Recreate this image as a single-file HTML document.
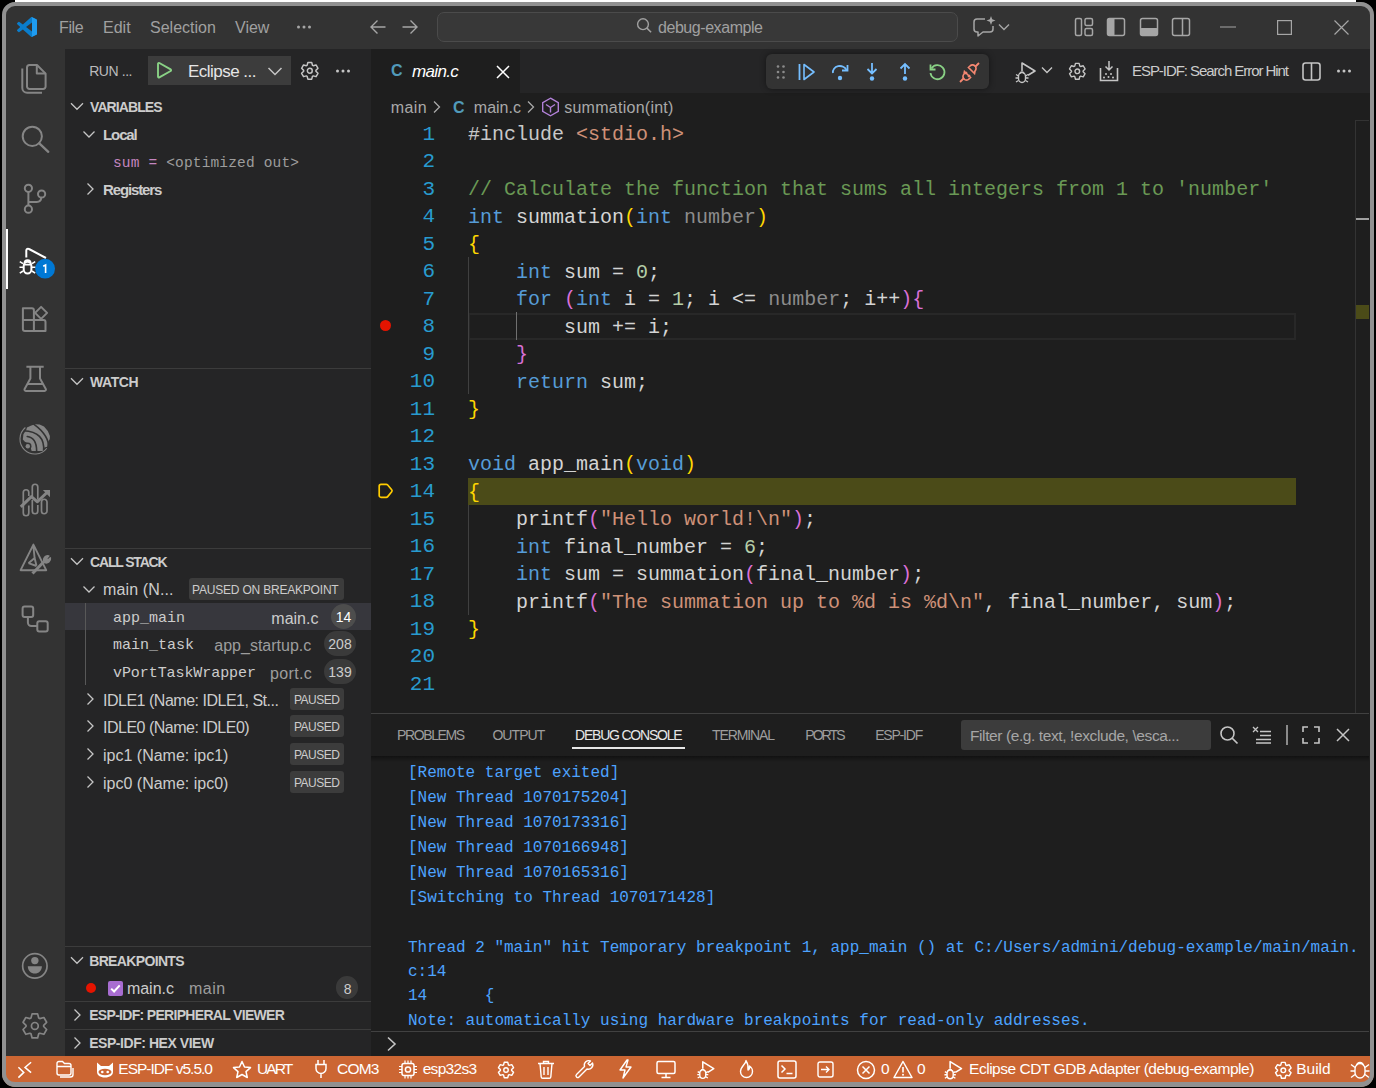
<!DOCTYPE html>
<html><head><meta charset="utf-8">
<style>
*{box-sizing:border-box}
html,body{margin:0;padding:0}
body{width:1376px;height:1088px;background:#000;position:relative;overflow:hidden;font-family:"Liberation Sans",sans-serif;}
.a{position:absolute}
.t{position:absolute;white-space:pre;line-height:1}
.mono{font-family:"Liberation Mono",monospace}
svg{position:absolute;overflow:visible}
#win{position:absolute;left:2px;top:2px;width:1372px;height:1085px;border-radius:13px;overflow:hidden;background:#1e1e1e}
#frame{position:absolute;left:2px;top:2px;width:1372px;height:1085px;border:4px solid #919191;border-bottom-width:5px;border-radius:13px;box-shadow:0 0 0 30px #000;pointer-events:none}
</style></head><body>
<div id="win">
<div style="position:absolute;left:-2px;top:-2px;width:1376px;height:1088px">
<!-- TITLE BAR -->
<div class="a" style="left:0;top:0;width:1376px;height:49px;background:#333333"></div>

<!-- title content -->
<svg style="left:17px;top:17px" width="20" height="20" viewBox="0 0 100 100"><path fill="#0a7dcc" d="M96.46 10.8L75.86.87a6.27 6.27 0 0 0-7.1 1.2L29.35 38.04 12.19 25.01a4.17 4.17 0 0 0-5.32.24L1.36 30.26a4.17 4.17 0 0 0 0 6.16L16.25 50 1.36 63.58a4.17 4.17 0 0 0 0 6.16l5.51 5.01a4.17 4.17 0 0 0 5.32.24l17.16-13.03L68.77 97.93a6.27 6.27 0 0 0 7.1 1.2l20.6-9.91A6.25 6.25 0 0 0 100 83.59V16.41a6.25 6.25 0 0 0-3.54-5.61zM75.02 72.7L45.11 50l29.91-22.7z"></path><path fill="#007acc" d="M96.46 10.8L75.86.87a6.27 6.27 0 0 0-7.1 1.2L1.36 63.58a4.17 4.17 0 0 0 0 6.16l5.51 5.01a4.17 4.17 0 0 0 5.32.24L93.46 10.05z" opacity="0"></path><path fill="#1f9cf0" d="M75.86.87a6.27 6.27 0 0 0-7.1 1.2 4 4 0 0 1 6.26 2.9V95a4 4 0 0 1-6.25 2.93 6.27 6.27 0 0 0 7.1 1.2l20.6-9.91A6.25 6.25 0 0 0 100 83.59V16.41a6.25 6.25 0 0 0-3.54-5.61z"></path></svg>
<div class="t" style="left: 59px; top: 20px; font-size: 16px; color: rgb(160, 160, 160); letter-spacing: -0.367px;">File</div>
<div class="t" style="left: 103px; top: 20px; font-size: 16px; color: rgb(160, 160, 160); letter-spacing: 0px;">Edit</div>
<div class="t" style="left: 150px; top: 20px; font-size: 16px; color: rgb(160, 160, 160); letter-spacing: 0px;">Selection</div>
<div class="t" style="left: 235px; top: 20px; font-size: 16px; color: rgb(160, 160, 160); letter-spacing: 0px;">View</div>
<svg style="left:296px;top:25px" width="16" height="4" viewBox="0 0 16 4"><circle cx="2.5" cy="2" r="1.5" fill="#a6a6a6"></circle><circle cx="8" cy="2" r="1.5" fill="#a6a6a6"></circle><circle cx="13.5" cy="2" r="1.5" fill="#a6a6a6"></circle></svg>
<svg style="left:369px;top:19px" width="18" height="16" viewBox="0 0 18 16"><path d="M16.5 8H2M8.5 1.5L2 8l6.5 6.5" stroke="#a6a6a6" stroke-width="1.4" fill="none"></path></svg>
<svg style="left:401px;top:19px" width="18" height="16" viewBox="0 0 18 16"><path d="M1.5 8H16M9.5 1.5L16 8l-6.5 6.5" stroke="#a6a6a6" stroke-width="1.4" fill="none"></path></svg>
<div class="a" style="left:437px;top:12px;width:521px;height:30px;border:1px solid #4b4b4b;background:#383838;border-radius:7px"></div>
<svg style="left:630px;top:12px" width="26" height="26" viewBox="630 12 26 26"><circle cx="643" cy="24.2" r="5.4" stroke="#a0a0a0" stroke-width="1.4" fill="none"></circle><path d="M646.9 28.1l4.2 4.2" stroke="#a0a0a0" stroke-width="1.5"></path></svg>
<div class="t" style="left: 658px; top: 20px; font-size: 16px; color: rgb(160, 160, 160); letter-spacing: -0.442px;">debug-example</div>
<svg style="left:972px;top:15px" width="26" height="24" viewBox="0 0 26 24"><path d="M13 4H5a3 3 0 0 0-3 3v7a3 3 0 0 0 3 3h1v4l5-4h7a3 3 0 0 0 3-3v-3" stroke="#a6a6a6" stroke-width="1.5" fill="none" stroke-linejoin="round"></path><path d="M19 1l1.2 3.3L23.5 5.5l-3.3 1.2L19 10l-1.2-3.3L14.5 5.5l3.3-1.2z" fill="#a6a6a6"></path></svg>
<svg style="left:998px;top:23px" width="12" height="8" viewBox="0 0 12 8"><path d="M1 1.5l5 5 5-5" stroke="#a6a6a6" stroke-width="1.4" fill="none"></path></svg>
<svg style="left:1074px;top:17px" width="20" height="20" viewBox="0 0 20 20"><rect x="1.5" y="1.5" width="6" height="17" rx="1.5" stroke="#a6a6a6" stroke-width="1.5" fill="none"></rect><rect x="11" y="1.5" width="7.5" height="7" rx="1.5" stroke="#a6a6a6" stroke-width="1.5" fill="none"></rect><rect x="11" y="11.5" width="7.5" height="7" rx="1.5" stroke="#a6a6a6" stroke-width="1.5" fill="none"></rect></svg>
<svg style="left:1106px;top:17px" width="20" height="20" viewBox="0 0 20 20"><rect x="1.5" y="1.5" width="17" height="17" rx="2" stroke="#a6a6a6" stroke-width="1.5" fill="none"></rect><rect x="1.5" y="1.5" width="7" height="17" rx="1" fill="#a6a6a6"></rect></svg>
<svg style="left:1139px;top:17px" width="20" height="20" viewBox="0 0 20 20"><rect x="1.5" y="1.5" width="17" height="17" rx="2" stroke="#a6a6a6" stroke-width="1.5" fill="none"></rect><rect x="1.5" y="11" width="17" height="7.5" rx="1" fill="#a6a6a6"></rect></svg>
<svg style="left:1171px;top:17px" width="20" height="20" viewBox="0 0 20 20"><rect x="1.5" y="1.5" width="17" height="17" rx="2" stroke="#a6a6a6" stroke-width="1.5" fill="none"></rect><path d="M11.5 1.5v17" stroke="#a6a6a6" stroke-width="1.5"></path></svg>
<svg style="left:1220px;top:26px" width="16" height="2" viewBox="0 0 16 2"><path d="M0 1h16" stroke="#a6a6a6" stroke-width="1.2"></path></svg>
<svg style="left:1277px;top:20px" width="15" height="15" viewBox="0 0 15 15"><rect x="0.6" y="0.6" width="13.8" height="13.8" stroke="#a6a6a6" stroke-width="1.2" fill="none"></rect></svg>
<svg style="left:1334px;top:20px" width="15" height="15" viewBox="0 0 15 15"><path d="M0.5 0.5l14 14M14.5 0.5l-14 14" stroke="#a6a6a6" stroke-width="1.2"></path></svg>
<!-- ACTIVITY BAR -->
<div class="a" style="left:0;top:49px;width:65px;height:1007px;background:#333333"></div>
<!-- SIDEBAR -->
<div class="a" style="left:65px;top:49px;width:306px;height:1007px;background:#252526"></div>

<!-- activity icons -->
<div class="a" style="left:6px;top:229px;width:2px;height:60px;background:#fff"></div>
<svg style="left:0;top:0" width="65" height="1088" viewBox="0 0 65 1088">
<g fill="none" stroke="#858585" stroke-width="2" stroke-linejoin="round">
<path d="M29.5 65H37l8.6 8.6V86.5a2.5 2.5 0 0 1-2.5 2.5H29.5A2.5 2.5 0 0 1 27 86.5V67.5A2.5 2.5 0 0 1 29.5 65z"></path>
<path d="M36.8 65v8.5h8.8"></path>
<path d="M22.3 68.5V88a4.8 4.8 0 0 0 4.8 4.8H42"></path>
<circle cx="32.3" cy="136.3" r="9.6"></circle>
<path d="M39.3 143.3L48.3 151.8" stroke-width="2.3" stroke-linecap="round"></path>
<circle cx="28.4" cy="188.3" r="3.6"></circle>
<circle cx="28.4" cy="209.2" r="3.6"></circle>
<circle cx="41.6" cy="194" r="3.6"></circle>
<path d="M28.4 191.9v13.7M41.2 197.6c0 2.6-1.8 4.4-4.4 4.4H28.6"></path>
<path d="M22.9 308.3h9a2 2 0 0 1 2 2V320H22.9z M22.9 320h11v11h-9a2 2 0 0 1-2-2z M33.9 320h9.6a2 2 0 0 1 2 2v9H33.9z"></path>
<path d="M41.1 306.9l6 6-6 6-6-6z"></path>
<path d="M26.4 366.8h17.3M30.4 366.8v11.6L24.6 389a1.4 1.4 0 0 0 1.2 2h18.8a1.4 1.4 0 0 0 1.2-2l-5.8-10.6V366.8M27.6 383.9h15.2"></path>
<path d="M23.3 513V492.5a2.75 2.75 0 0 1 5.5 0V496M28.8 505.5V513a2.75 2.75 0 0 1-5.5 0M32.3 496V487a2.75 2.75 0 0 1 5.5 0V499.5M37.8 505V511a2.75 2.75 0 0 1-5.5 0V500M41.5 511V502a2.75 2.75 0 0 1 5.5 0V511a2.75 2.75 0 0 1-5.5 0z" stroke-width="1.7"></path>
<path d="M20.8 506.8L31.4 496.6l6 5.2 9.8-9.6" stroke-width="3"></path>
<path d="M42.8 490h7.2v7.2z" fill="#858585" stroke="none"></path>
<path d="M33.4 544.6L20.6 570.2h25.6z M33.4 546L34.6 558 28.5 563.2M34.6 558l1.9 7.8M28.5 563.2l8 2.8" stroke-width="1.9"></path>
<path d="M32.5 573.5l11.3-11.8" stroke-width="3"></path>
<path d="M43.8 561.5a4.2 4.2 0 0 1 5-5.6l-2.3 2.5 1.4 1.6 2.5-2.1a4.2 4.2 0 0 1-5.8 4.6z" fill="#858585" stroke-width="1.5"></path>
<rect x="22.6" y="606.4" width="10.6" height="10.6" rx="2"></rect>
<rect x="37.3" y="621.3" width="10.4" height="10.3" rx="2"></rect>
<path d="M27.9 617v5.5a3.5 3.5 0 0 0 3.5 3.5h5.9"></path>
<circle cx="34.85" cy="965.9" r="12.2" stroke-width="1.7"></circle>
<path d="M5.81 3.51 L6.43 1.18 L9.57 1.18 L10.19 3.51 L10.80 3.85 L13.12 3.23 L14.69 5.95 L12.99 7.65 L12.99 8.35 L14.69 10.05 L13.12 12.77 L10.80 12.15 L10.19 12.49 L9.57 14.82 L6.43 14.82 L5.81 12.49 L5.20 12.15 L2.88 12.77 L1.31 10.05 L3.01 8.35 L3.01 7.65 L1.31 5.95 L2.88 3.23 L5.20 3.85Z" transform="translate(20.75 1011.8) scale(1.7625)" stroke-width="0.95"></path>
<circle cx="34.85" cy="1025.9" r="3.4" stroke-width="1.7"></circle>
</g>
<circle cx="34.85" cy="960.6" r="3.7" fill="#858585"></circle>
<path d="M27.8 966.2h14.1c0 4.2-3.2 7.4-7.05 7.4s-7.05-3.2-7.05-7.4z" fill="#858585"></path>
<path d="M22.82 439.47 L23.41 434.18 L26.35 429.76 L26.94 427.41 L30.76 425.65 L34.88 424.32 L39.59 424.62 L44.00 426.53 L47.82 430.94 L49.88 435.94 L49.74 439.03 L48.12 442.12 L47.24 446.82 L44.29 447.41 L43.41 450.94 L37.24 451.09 L31.65 451.09 L30.76 448.00 L28.71 443.59 L24.88 441.82Z" fill="#858585"></path><path d="M27.24 436.53 Q36.65 437.56 36.65 451.24 M23.41 430.71 Q45.47 431.68 43.56 451.24 M33.71 424.18 Q49.88 436.09 48.41 448.29" stroke="#333" stroke-width="1.6" fill="none" stroke-linecap="round"></path><circle cx="27.8" cy="446.2" r="3.7" fill="#333"></circle><circle cx="27.8" cy="446.2" r="2.2" fill="#858585"></circle><path d="M46.82 448.23 A15 15 0 1 1 25.36 427.51" stroke="#858585" stroke-width="1.1" fill="none"></path>
<g fill="none" stroke="#fff" stroke-width="2" stroke-linejoin="round">
<path d="M26.3 257.5V250.5a1.8 1.8 0 0 1 2.7-1.5L46 258"></path>
<path d="M23.7 266a3.85 4.2 0 0 1 7.7 0v3.3a3.85 4.2 0 0 1-7.7 0z" fill="#333"></path>
<path d="M24.6 263.3a2.9 2.9 0 0 1 5.9 0"></path>
<path d="M23.7 264.6h7.7M19.8 261.6l3.2 2M35.2 261.6l-3.2 2M19.5 267.3h4M35.6 267.3h-4M19.8 273.2l3.2-2.2M35.2 273.2l-3.2-2.2" stroke-width="1.6"></path>
</g>
<circle cx="45.1" cy="268.7" r="9.9" fill="#0078d4"></circle>
<path d="M43.2 266.3l2.4-1.3V273" stroke="#fff" stroke-width="1.6" fill="none"></path>
</svg>

<div class="t" style="left: 89.2px; top: 64px; font-size: 14px; color: rgb(187, 187, 187); letter-spacing: -0.433px;">RUN ...</div>
<div class="a" style="left:148px;top:56px;width:143px;height:29px;background:#3c3c3c"></div>
<svg style="left:154px;top:60px" width="20" height="20" viewBox="0 0 20 20"><path d="M4 3.8a.9.9 0 0 1 1.35-.78l11.3 6.4a.9.9 0 0 1 0 1.56l-11.3 6.4A.9.9 0 0 1 4 16.6z" stroke="#89d185" stroke-width="1.9" fill="none" stroke-linejoin="round"></path></svg>
<div class="t" style="left: 188px; top: 63px; font-size: 17px; color: rgb(230, 230, 230); letter-spacing: -0.52px;">Eclipse ...</div>
<svg style="left:267px;top:64px" width="16" height="14" viewBox="0 0 16 14"><path d="M1.5 4l6.5 6.5L14.5 4" stroke="#c5c5c5" stroke-width="1.5" fill="none"></path></svg>
<svg style="left:300.2px;top:61.1px" width="19.6" height="19.6" viewBox="0 0 16 16"><path d="M5.81 3.51 L6.43 1.18 L9.57 1.18 L10.19 3.51 L10.80 3.85 L13.12 3.23 L14.69 5.95 L12.99 7.65 L12.99 8.35 L14.69 10.05 L13.12 12.77 L10.80 12.15 L10.19 12.49 L9.57 14.82 L6.43 14.82 L5.81 12.49 L5.20 12.15 L2.88 12.77 L1.31 10.05 L3.01 8.35 L3.01 7.65 L1.31 5.95 L2.88 3.23 L5.20 3.85Z" fill="none" stroke="#c5c5c5" stroke-width="1.2" stroke-linejoin="round"></path><circle cx="8" cy="8" r="2" fill="none" stroke="#c5c5c5" stroke-width="1.2"></circle></svg>
<svg style="left:335px;top:69px" width="16" height="4" viewBox="0 0 16 4"><circle cx="2.5" cy="2" r="1.5" fill="#c5c5c5"></circle><circle cx="8" cy="2" r="1.5" fill="#c5c5c5"></circle><circle cx="13.5" cy="2" r="1.5" fill="#c5c5c5"></circle></svg>
<svg style="left:70px;top:99px" width="14" height="14" viewBox="0 0 14 14"><path d="M1 4.3l6 6 6-6" stroke="#c5c5c5" stroke-width="1.3" fill="none"></path></svg>
<div class="t" style="left: 90px; top: 100px; font-size: 14px; color: rgb(204, 204, 204); font-weight: bold; letter-spacing: -0.912px;">VARIABLES</div>
<svg style="left:82px;top:127px" width="14" height="14" viewBox="0 0 14 14"><path d="M1.5 4.5l5.5 5.5 5.5-5.5" stroke="#c5c5c5" stroke-width="1.3" fill="none"></path></svg>
<div class="t" style="left: 103px; top: 127px; font-size: 15px; color: rgb(204, 204, 204); font-weight: bold; letter-spacing: -1.1px;">Local</div>
<div class="t mono" style="left: 113px; top: 156px; font-size: 14.5px; color: rgb(157, 157, 157); letter-spacing: 0.16px;"><span style="color:#c586c0">sum</span> <span style="color:#c586c0">=</span> &lt;optimized out&gt;</div>
<svg style="left:82.5px;top:182px" width="14" height="14" viewBox="0 0 14 14"><path d="M4.5 1.5l5.5 5.5-5.5 5.5" stroke="#c5c5c5" stroke-width="1.3" fill="none"></path></svg>
<div class="t" style="left: 103px; top: 182px; font-size: 15px; color: rgb(204, 204, 204); font-weight: bold; letter-spacing: -1.125px;">Registers</div>
<div class="a" style="left:65px;top:368px;width:306px;height:1px;background:#3c3c3c"></div>
<svg style="left:70px;top:374px" width="14" height="14" viewBox="0 0 14 14"><path d="M1 4.3l6 6 6-6" stroke="#c5c5c5" stroke-width="1.3" fill="none"></path></svg>
<div class="t" style="left: 90px; top: 375px; font-size: 14px; color: rgb(204, 204, 204); font-weight: bold; letter-spacing: -0.4px;">WATCH</div>
<div class="a" style="left:65px;top:548px;width:306px;height:1px;background:#3c3c3c"></div>
<svg style="left:70px;top:554px" width="14" height="14" viewBox="0 0 14 14"><path d="M1 4.3l6 6 6-6" stroke="#c5c5c5" stroke-width="1.3" fill="none"></path></svg>
<div class="t" style="left: 90px; top: 555px; font-size: 14px; color: rgb(204, 204, 204); font-weight: bold; letter-spacing: -1.167px;">CALL STACK</div>
<svg style="left:82px;top:582px" width="14" height="14" viewBox="0 0 14 14"><path d="M1.5 4.5l5.5 5.5 5.5-5.5" stroke="#c5c5c5" stroke-width="1.3" fill="none"></path></svg>
<div class="t" style="left: 103px; top:582.0px; font-size: 16px; color: rgb(204, 204, 204); letter-spacing: 0.133px;">main (N...</div>
<div class="a" style="left:189px;top:578px;width:155px;height:22px;background:#3c3c3c;border-radius:3px"></div>
<div class="t" style="left: 192px; top: 584px; font-size: 12px; color: rgb(204, 204, 204); letter-spacing: -0.2px;">PAUSED ON BREAKPOINT</div>
<div class="a" style="left:65px;top:603px;width:306px;height:27px;background:#37373d"></div>
<div class="a" style="left:85px;top:603px;width:1px;height:82px;background:#585858"></div>
<div class="t mono" style="left: 113px; top:610.5px; font-size: 15px; color: rgb(204, 204, 204); letter-spacing: 0px;">app_main</div>
<div class="t" style="left: 271.3px; top:611.0px; font-size: 16px; color: rgb(204, 204, 204); letter-spacing: 0px;">main.c</div>
<div class="a" style="left:331px;top:604px;width:25px;height:25px;border-radius:13px;background:#4d4d4d"></div>
<div class="t" style="left: 331px; top: 610px; font-size: 14px; color: rgb(255, 255, 255); width: 25px; text-align: center; letter-spacing: 0px;">14</div>
<div class="t mono" style="left: 113px; top:637.5px; font-size: 15px; color: rgb(204, 204, 204); letter-spacing: 0px;">main_task</div>
<div class="t" style="left: 214.3px; top:638.0px; font-size: 16px; color: rgb(157, 157, 157); letter-spacing: 0px;">app_startup.c</div>
<div class="a" style="left:324px;top:631px;width:32px;height:25px;border-radius:13px;background:#3a3a3a"></div>
<div class="t" style="left: 324px; top: 637px; font-size: 14px; color: rgb(204, 204, 204); width: 32px; text-align: center; letter-spacing: 0px;">208</div>
<div class="t mono" style="left: 113px; top:665.5px; font-size: 15px; color: rgb(204, 204, 204); letter-spacing: -0.073px;">vPortTaskWrapper</div>
<div class="t" style="left: 270px; top:666.0px; font-size: 16px; color: rgb(157, 157, 157); letter-spacing: 0.34px;">port.c</div>
<div class="a" style="left:324px;top:659px;width:32px;height:25px;border-radius:13px;background:#3a3a3a"></div>
<div class="t" style="left: 324px; top: 665px; font-size: 14px; color: rgb(204, 204, 204); width: 32px; text-align: center; letter-spacing: 0px;">139</div>
<svg style="left:82.5px;top:692px" width="14" height="14" viewBox="0 0 14 14"><path d="M4.5 1.5l5.5 5.5-5.5 5.5" stroke="#c5c5c5" stroke-width="1.3" fill="none"></path></svg>
<div class="t" style="left: 103px; top: 693px; font-size: 16px; color: rgb(204, 204, 204); letter-spacing: -0.487px;">IDLE1 (Name: IDLE1, St...</div>
<div class="a" style="left:290px;top:688px;width:54px;height:22px;background:#3c3c3c;border-radius:3px"></div>
<div class="t" style="left:294px;top:694px;font-size:12px;color:#cccccc;letter-spacing:-0.5px">PAUSED</div>
<svg style="left:82.5px;top:719px" width="14" height="14" viewBox="0 0 14 14"><path d="M4.5 1.5l5.5 5.5-5.5 5.5" stroke="#c5c5c5" stroke-width="1.3" fill="none"></path></svg>
<div class="t" style="left: 103px; top: 720px; font-size: 16px; color: rgb(204, 204, 204); letter-spacing: -0.5px;">IDLE0 (Name: IDLE0)</div>
<div class="a" style="left:290px;top:715px;width:54px;height:22px;background:#3c3c3c;border-radius:3px"></div>
<div class="t" style="left:294px;top:721px;font-size:12px;color:#cccccc;letter-spacing:-0.5px">PAUSED</div>
<svg style="left:82.5px;top:747px" width="14" height="14" viewBox="0 0 14 14"><path d="M4.5 1.5l5.5 5.5-5.5 5.5" stroke="#c5c5c5" stroke-width="1.3" fill="none"></path></svg>
<div class="t" style="left: 103px; top: 748px; font-size: 16px; color: rgb(204, 204, 204); letter-spacing: 0px;">ipc1 (Name: ipc1)</div>
<div class="a" style="left:290px;top:743px;width:54px;height:22px;background:#3c3c3c;border-radius:3px"></div>
<div class="t" style="left:294px;top:749px;font-size:12px;color:#cccccc;letter-spacing:-0.5px">PAUSED</div>
<svg style="left:82.5px;top:775px" width="14" height="14" viewBox="0 0 14 14"><path d="M4.5 1.5l5.5 5.5-5.5 5.5" stroke="#c5c5c5" stroke-width="1.3" fill="none"></path></svg>
<div class="t" style="left: 103px; top: 776px; font-size: 16px; color: rgb(204, 204, 204); letter-spacing: 0px;">ipc0 (Name: ipc0)</div>
<div class="a" style="left:290px;top:771px;width:54px;height:22px;background:#3c3c3c;border-radius:3px"></div>
<div class="t" style="left:294px;top:777px;font-size:12px;color:#cccccc;letter-spacing:-0.5px">PAUSED</div>
<div class="a" style="left:65px;top:946px;width:306px;height:1px;background:#3c3c3c"></div>
<svg style="left:70px;top:953px" width="14" height="14" viewBox="0 0 14 14"><path d="M1 4.3l6 6 6-6" stroke="#c5c5c5" stroke-width="1.3" fill="none"></path></svg>
<div class="t" style="left: 89.2px; top: 954px; font-size: 14px; color: rgb(204, 204, 204); font-weight: bold; letter-spacing: -0.65px;">BREAKPOINTS</div>
<div class="a" style="left:86px;top:983px;width:10px;height:10px;border-radius:50%;background:#e51400"></div>
<div class="a" style="left:108px;top:981px;width:15px;height:15px;border-radius:2px;background:#a86dd1"></div>
<svg style="left:108px;top:981px" width="15" height="15" viewBox="0 0 15 15"><path d="M3.2 7.6l2.9 2.9 5.6-6.1" stroke="#fff" stroke-width="2" fill="none"/></svg>
<div class="t" style="left: 126.9px; top: 981px; font-size: 16px; color: rgb(204, 204, 204); letter-spacing: 0px;">main.c</div>
<div class="t" style="left: 189px; top:981.0px; font-size: 16px; color: rgb(157, 157, 157); letter-spacing: 0.5px;">main</div>
<div class="a" style="left:336px;top:976px;width:22px;height:23px;border-radius:12px;background:#3a3a3a"></div>
<div class="t" style="left: 336.7px; top: 982px; font-size: 14px; color: rgb(204, 204, 204); width: 22px; text-align: center; letter-spacing: 0px;">8</div>
<div class="a" style="left:65px;top:1001px;width:306px;height:1px;background:#3c3c3c"></div>
<svg style="left:70px;top:1008px" width="14" height="14" viewBox="0 0 14 14"><path d="M4.5 1.5l5.5 5.5-5.5 5.5" stroke="#c5c5c5" stroke-width="1.3" fill="none"></path></svg>
<div class="t" style="left: 89.2px; top: 1008px; font-size: 14px; color: rgb(204, 204, 204); font-weight: bold; letter-spacing: -0.688px;">ESP-IDF: PERIPHERAL VIEWER</div>
<div class="a" style="left:65px;top:1029px;width:306px;height:1px;background:#3c3c3c"></div>
<svg style="left:70px;top:1036px" width="14" height="14" viewBox="0 0 14 14"><path d="M4.5 1.5l5.5 5.5-5.5 5.5" stroke="#c5c5c5" stroke-width="1.3" fill="none"></path></svg>
<div class="t" style="left: 89.2px; top: 1036px; font-size: 14px; color: rgb(204, 204, 204); font-weight: bold; letter-spacing: -0.45px;">ESP-IDF: HEX VIEW</div>
<!-- EDITOR TAB BAR -->
<div class="a" style="left:371px;top:49px;width:1005px;height:44px;background:#252526"></div>
<div class="a" style="left:371px;top:49px;width:149px;height:44px;background:#1e1e1e"></div>
<div class="t" style="left:391px;top:63.0px;font-size:16px;color:#519aba;font-weight:bold">C</div>
<div class="t" style="left: 412px; top:63.0px; font-size: 17px; color: rgb(255, 255, 255); font-style: italic; letter-spacing: -0.64px;">main.c</div>
<svg style="left:496px;top:65.0px" width="14" height="14" viewBox="0 0 14 14"><path d="M1 1l12 12M13 1L1 13" stroke="#fff" stroke-width="1.5"></path></svg>
<div class="a" style="left:766px;top:54px;width:223px;height:35px;background:#333333;border-radius:6px;box-shadow:0 0 6px rgba(0,0,0,.45)"></div>
<svg style="left:776px;top:64.0px" width="10" height="16" viewBox="0 0 10 16"><g fill="#8b8b8b"><circle cx="2" cy="2.5" r="1.3"></circle><circle cx="7.5" cy="2.5" r="1.3"></circle><circle cx="2" cy="8" r="1.3"></circle><circle cx="7.5" cy="8" r="1.3"></circle><circle cx="2" cy="13.5" r="1.3"></circle><circle cx="7.5" cy="13.5" r="1.3"></circle></g></svg>
<svg style="left:797px;top:62.0px" width="20" height="20" viewBox="0 0 20 20"><path d="M2.5 2v16" stroke="#75beff" stroke-width="1.8"></path><path d="M7 2.5l10 7.5-10 7.5z" stroke="#75beff" stroke-width="1.6" fill="none" stroke-linejoin="round"></path></svg>
<svg style="left:830px;top:62.0px" width="20" height="20" viewBox="0 0 20 20"><path d="M3 11a7 6 0 0 1 13.5-3" stroke="#75beff" stroke-width="1.8" fill="none"></path><path d="M17.5 3v5.5h-5.5" stroke="#75beff" stroke-width="1.8" fill="none"></path><circle cx="10" cy="16" r="2.2" fill="#75beff"></circle></svg>
<svg style="left:862px;top:62.0px" width="20" height="20" viewBox="0 0 20 20"><path d="M10 1v10M5.5 7l4.5 4.5L14.5 7" stroke="#75beff" stroke-width="1.8" fill="none"></path><circle cx="10" cy="16.5" r="2.2" fill="#75beff"></circle></svg>
<svg style="left:895px;top:62.0px" width="20" height="20" viewBox="0 0 20 20"><path d="M10 12V2M5.5 6.5L10 2l4.5 4.5" stroke="#75beff" stroke-width="1.8" fill="none"></path><circle cx="10" cy="16.5" r="2.2" fill="#75beff"></circle></svg>
<svg style="left:927px;top:62.0px" width="20" height="20" viewBox="0 0 20 20"><path d="M4.5 6.5A7 7 0 1 1 3.5 11" stroke="#89d185" stroke-width="1.8" fill="none"></path><path d="M3.5 2.5v5h5" stroke="#89d185" stroke-width="1.8" fill="none"></path></svg>
<svg style="left:959px;top:62.0px" width="21" height="21" viewBox="0 0 21 21"><path d="M1 20l4-4M20 1l-4 4" stroke="#f48771" stroke-width="1.8"></path><path d="M5.5 9.5l6 6-1.5 1.5a3.5 3.5 0 0 1-5-5zM15.5 11.5l-6-6 1.5-1.5a3.5 3.5 0 0 1 5 5z" stroke="#f48771" stroke-width="1.7" fill="none"></path><path d="M6 12l2-2M9 15l2-2" stroke="#f48771" stroke-width="1.6"></path></svg>
<svg style="left:1014px;top:60px" width="26" height="24" viewBox="0 0 26 24"><path d="M8 11V3l13 8-7 4.3" stroke="#c5c5c5" stroke-width="1.6" fill="none" stroke-linejoin="round"></path><path d="M4.5 16.5a3.5 4 0 0 1 7 0v2a3.5 4 0 0 1-7 0z M6 14a2 2 0 0 1 4 0" stroke="#c5c5c5" stroke-width="1.4" fill="#1e1e1e"></path><path d="M2 14.5l2.5 1.5M14 14.5l-2.5 1.5M1.5 18h3M14.5 18h-3M2 22l2.5-1.5M14 22l-2.5-1.5" stroke="#c5c5c5" stroke-width="1.3"></path></svg>
<svg style="left:1041px;top:66px" width="12" height="8" viewBox="0 0 12 8"><path d="M1 1.5l5 5 5-5" stroke="#c5c5c5" stroke-width="1.4" fill="none"></path></svg>
<svg style="left:1067.6px;top:61.7px" width="18.6" height="18.6" viewBox="0 0 16 16"><path d="M5.81 3.51 L6.43 1.18 L9.57 1.18 L10.19 3.51 L10.80 3.85 L13.12 3.23 L14.69 5.95 L12.99 7.65 L12.99 8.35 L14.69 10.05 L13.12 12.77 L10.80 12.15 L10.19 12.49 L9.57 14.82 L6.43 14.82 L5.81 12.49 L5.20 12.15 L2.88 12.77 L1.31 10.05 L3.01 8.35 L3.01 7.65 L1.31 5.95 L2.88 3.23 L5.20 3.85Z" fill="none" stroke="#c5c5c5" stroke-width="1.2" stroke-linejoin="round"></path><circle cx="8" cy="8" r="2" fill="none" stroke="#c5c5c5" stroke-width="1.2"></circle></svg>
<svg style="left:1099px;top:60px" width="20" height="22" viewBox="0 0 20 22"><path d="M1.5 8v12.5h17V8" stroke="#c5c5c5" stroke-width="1.6" fill="none"></path><path d="M10 1v9M6.5 6.5L10 10l3.5-3.5" stroke="#c5c5c5" stroke-width="1.5" fill="none"></path><g fill="#c5c5c5"><circle cx="7" cy="14" r="1"></circle><circle cx="12" cy="14" r="1"></circle><circle cx="9.5" cy="17" r="1"></circle><circle cx="5" cy="17.5" r="1"></circle><circle cx="14" cy="17.5" r="1"></circle></g></svg>
<div class="t" style="left: 1132px; top: 63px; font-size: 15px; color: rgb(204, 204, 204); letter-spacing: -1.056px;">ESP-IDF: Search Error Hint</div>
<svg style="left:1302px;top:62px" width="19" height="19" viewBox="0 0 19 19"><rect x="1" y="1" width="17" height="17" rx="2.5" stroke="#c5c5c5" stroke-width="1.6" fill="none"></rect><path d="M9.5 1v17" stroke="#c5c5c5" stroke-width="1.6"></path></svg>
<svg style="left:1336px;top:69px" width="16" height="4" viewBox="0 0 16 4"><circle cx="2.5" cy="2" r="1.5" fill="#c5c5c5"></circle><circle cx="8" cy="2" r="1.5" fill="#c5c5c5"></circle><circle cx="13.5" cy="2" r="1.5" fill="#c5c5c5"></circle></svg>
<div class="t" style="left: 390.7px; top:100.0px; font-size: 16px; color: rgb(169, 169, 169); letter-spacing: 0.433px;">main</div>
<svg style="left:431px;top:100px" width="12" height="14" viewBox="0 0 12 14"><path d="M3 1.5l5.5 5.5L3 12.5" stroke="#a9a9a9" stroke-width="1.3" fill="none"></path></svg>
<div class="t" style="left:453px;top:100.0px;font-size:16px;color:#519aba;font-weight:bold">C</div>
<div class="t" style="left: 473.8px; top:100.0px; font-size: 16px; color: rgb(169, 169, 169); letter-spacing: 0px;">main.c</div>
<svg style="left:525px;top:100px" width="12" height="14" viewBox="0 0 12 14"><path d="M3 1.5l5.5 5.5L3 12.5" stroke="#a9a9a9" stroke-width="1.3" fill="none"></path></svg>
<svg style="left:541px;top:97px" width="19" height="20" viewBox="0 0 19 20"><path d="M9.5 1.2l7.8 4.4v8.8l-7.8 4.4-7.8-4.4V5.6z" stroke="#b180d7" stroke-width="1.4" fill="none"></path><path d="M5 7.5l4.5 3 4.5-3M9.5 10.5v5" stroke="#b180d7" stroke-width="1.4" fill="none"></path></svg>
<div class="t" style="left: 564.2px; top:100.0px; font-size: 16px; color: rgb(169, 169, 169); letter-spacing: 0.261px;">summation(int)</div>
<div class="a" style="left:468px;top:478px;width:828px;height:27px;background:#4b4b18"></div>
<div class="a" style="left:468px;top:313px;width:828px;height:27px;border:2px solid #282828"></div>
<div class="a" style="left:468px;top:257px;width:1px;height:137px;background:#404040"></div>
<div class="a" style="left:516px;top:312px;width:1px;height:28px;background:#707070"></div>
<div class="a" style="left:468px;top:505px;width:1px;height:110px;background:#404040"></div>
<div class="a" style="left:380px;top:320px;width:11px;height:11px;border-radius:50%;background:#e51400"></div>
<svg style="left:377px;top:482px" width="18" height="18" viewBox="0 0 18 18"><path d="M4 2.3h5.2a2 2 0 0 1 1.5.7l4 4.8a1.6 1.6 0 0 1 0 2l-4 4.8a2 2 0 0 1-1.5.7H4a1.8 1.8 0 0 1-1.8-1.8V4.1A1.8 1.8 0 0 1 4 2.3z" stroke="#ffcc00" stroke-width="1.7" fill="none" stroke-linejoin="round"></path></svg>
<div class="t mono" style="left:395px;top:120.75px;width:40px;height:27.5px;line-height:27.5px;text-align:right;font-size:21px;color:#289bcf">1</div>
<div class="t mono" style="left:468px;top:121.25px;height:27.5px;line-height:27.5px;font-size:20px"><span style="color:#c8c8c8">#include </span><span style="color:#ce9178">&lt;stdio.h&gt;</span></div>
<div class="t mono" style="left:395px;top:148.25px;width:40px;height:27.5px;line-height:27.5px;text-align:right;font-size:21px;color:#289bcf">2</div>
<div class="t mono" style="left:395px;top:175.75px;width:40px;height:27.5px;line-height:27.5px;text-align:right;font-size:21px;color:#289bcf">3</div>
<div class="t mono" style="left:468px;top:176.25px;height:27.5px;line-height:27.5px;font-size:20px"><span style="color:#6a9955">// Calculate the function that sums all integers from 1 to 'number'</span></div>
<div class="t mono" style="left:395px;top:203.25px;width:40px;height:27.5px;line-height:27.5px;text-align:right;font-size:21px;color:#289bcf">4</div>
<div class="t mono" style="left:468px;top:203.75px;height:27.5px;line-height:27.5px;font-size:20px"><span style="color:#569cd6">int</span><span style="color:#d4d4d4"> summation</span><span style="color:#ffd700">(</span><span style="color:#569cd6">int</span><span style="color:#d4d4d4"> </span><span style="color:#8c8c8c">number</span><span style="color:#ffd700">)</span></div>
<div class="t mono" style="left:395px;top:230.75px;width:40px;height:27.5px;line-height:27.5px;text-align:right;font-size:21px;color:#289bcf">5</div>
<div class="t mono" style="left:468px;top:231.25px;height:27.5px;line-height:27.5px;font-size:20px"><span style="color:#ffd700">{</span></div>
<div class="t mono" style="left:395px;top:258.25px;width:40px;height:27.5px;line-height:27.5px;text-align:right;font-size:21px;color:#289bcf">6</div>
<div class="t mono" style="left:468px;top:258.75px;height:27.5px;line-height:27.5px;font-size:20px"><span style="color:#d4d4d4">    </span><span style="color:#569cd6">int</span><span style="color:#d4d4d4"> sum = </span><span style="color:#b5cea8">0</span><span style="color:#d4d4d4">;</span></div>
<div class="t mono" style="left:395px;top:285.75px;width:40px;height:27.5px;line-height:27.5px;text-align:right;font-size:21px;color:#289bcf">7</div>
<div class="t mono" style="left:468px;top:286.25px;height:27.5px;line-height:27.5px;font-size:20px"><span style="color:#d4d4d4">    </span><span style="color:#569cd6">for</span><span style="color:#d4d4d4"> </span><span style="color:#da70d6">(</span><span style="color:#569cd6">int</span><span style="color:#d4d4d4"> i = </span><span style="color:#b5cea8">1</span><span style="color:#d4d4d4">; i &lt;= </span><span style="color:#8c8c8c">number</span><span style="color:#d4d4d4">; i++</span><span style="color:#da70d6">)</span><span style="color:#da70d6">{</span></div>
<div class="t mono" style="left:395px;top:313.25px;width:40px;height:27.5px;line-height:27.5px;text-align:right;font-size:21px;color:#289bcf">8</div>
<div class="t mono" style="left:468px;top:313.75px;height:27.5px;line-height:27.5px;font-size:20px"><span style="color:#d4d4d4">        sum += i;</span></div>
<div class="t mono" style="left:395px;top:340.75px;width:40px;height:27.5px;line-height:27.5px;text-align:right;font-size:21px;color:#289bcf">9</div>
<div class="t mono" style="left:468px;top:341.25px;height:27.5px;line-height:27.5px;font-size:20px"><span style="color:#d4d4d4">    </span><span style="color:#da70d6">}</span></div>
<div class="t mono" style="left:395px;top:368.25px;width:40px;height:27.5px;line-height:27.5px;text-align:right;font-size:21px;color:#289bcf">10</div>
<div class="t mono" style="left:468px;top:368.75px;height:27.5px;line-height:27.5px;font-size:20px"><span style="color:#d4d4d4">    </span><span style="color:#569cd6">return</span><span style="color:#d4d4d4"> sum;</span></div>
<div class="t mono" style="left:395px;top:395.75px;width:40px;height:27.5px;line-height:27.5px;text-align:right;font-size:21px;color:#289bcf">11</div>
<div class="t mono" style="left:468px;top:396.25px;height:27.5px;line-height:27.5px;font-size:20px"><span style="color:#ffd700">}</span></div>
<div class="t mono" style="left:395px;top:423.25px;width:40px;height:27.5px;line-height:27.5px;text-align:right;font-size:21px;color:#289bcf">12</div>
<div class="t mono" style="left:395px;top:450.75px;width:40px;height:27.5px;line-height:27.5px;text-align:right;font-size:21px;color:#289bcf">13</div>
<div class="t mono" style="left:468px;top:451.25px;height:27.5px;line-height:27.5px;font-size:20px"><span style="color:#569cd6">void</span><span style="color:#d4d4d4"> app_main</span><span style="color:#ffd700">(</span><span style="color:#569cd6">void</span><span style="color:#ffd700">)</span></div>
<div class="t mono" style="left:395px;top:478.25px;width:40px;height:27.5px;line-height:27.5px;text-align:right;font-size:21px;color:#289bcf">14</div>
<div class="t mono" style="left:468px;top:478.75px;height:27.5px;line-height:27.5px;font-size:20px"><span style="color:#ffd700">{</span></div>
<div class="t mono" style="left:395px;top:505.75px;width:40px;height:27.5px;line-height:27.5px;text-align:right;font-size:21px;color:#289bcf">15</div>
<div class="t mono" style="left:468px;top:506.25px;height:27.5px;line-height:27.5px;font-size:20px"><span style="color:#d4d4d4">    printf</span><span style="color:#da70d6">(</span><span style="color:#ce9178">"Hello world!\n"</span><span style="color:#da70d6">)</span><span style="color:#d4d4d4">;</span></div>
<div class="t mono" style="left:395px;top:533.25px;width:40px;height:27.5px;line-height:27.5px;text-align:right;font-size:21px;color:#289bcf">16</div>
<div class="t mono" style="left:468px;top:533.75px;height:27.5px;line-height:27.5px;font-size:20px"><span style="color:#d4d4d4">    </span><span style="color:#569cd6">int</span><span style="color:#d4d4d4"> final_number = </span><span style="color:#b5cea8">6</span><span style="color:#d4d4d4">;</span></div>
<div class="t mono" style="left:395px;top:560.75px;width:40px;height:27.5px;line-height:27.5px;text-align:right;font-size:21px;color:#289bcf">17</div>
<div class="t mono" style="left:468px;top:561.25px;height:27.5px;line-height:27.5px;font-size:20px"><span style="color:#d4d4d4">    </span><span style="color:#569cd6">int</span><span style="color:#d4d4d4"> sum = summation</span><span style="color:#da70d6">(</span><span style="color:#d4d4d4">final_number</span><span style="color:#da70d6">)</span><span style="color:#d4d4d4">;</span></div>
<div class="t mono" style="left:395px;top:588.25px;width:40px;height:27.5px;line-height:27.5px;text-align:right;font-size:21px;color:#289bcf">18</div>
<div class="t mono" style="left:468px;top:588.75px;height:27.5px;line-height:27.5px;font-size:20px"><span style="color:#d4d4d4">    printf</span><span style="color:#da70d6">(</span><span style="color:#ce9178">"The summation up to %d is %d\n"</span><span style="color:#d4d4d4">, final_number, sum</span><span style="color:#da70d6">)</span><span style="color:#d4d4d4">;</span></div>
<div class="t mono" style="left:395px;top:615.75px;width:40px;height:27.5px;line-height:27.5px;text-align:right;font-size:21px;color:#289bcf">19</div>
<div class="t mono" style="left:468px;top:616.25px;height:27.5px;line-height:27.5px;font-size:20px"><span style="color:#ffd700">}</span></div>
<div class="t mono" style="left:395px;top:643.25px;width:40px;height:27.5px;line-height:27.5px;text-align:right;font-size:21px;color:#289bcf">20</div>
<div class="t mono" style="left:395px;top:670.75px;width:40px;height:27.5px;line-height:27.5px;text-align:right;font-size:21px;color:#289bcf">21</div>
<div class="a" style="left:1355px;top:120px;width:1px;height:593px;background:#333"></div>
<div class="a" style="left:1355px;top:120px;width:14px;height:1px;background:#333"></div>
<div class="a" style="left:1356px;top:218px;width:13px;height:2px;background:#a0a0a0"></div>
<div class="a" style="left:1356px;top:305px;width:13px;height:14px;background:#4b4b18"></div>
<div class="a" style="left:371px;top:713px;width:998px;height:1px;background:#414141"></div>
<div class="t" style="left: 397px; top: 728px; font-size: 14px; color: rgb(157, 157, 157); letter-spacing: -1.371px;">PROBLEMS</div>
<div class="t" style="left: 492.4px; top: 728px; font-size: 14px; color: rgb(157, 157, 157); letter-spacing: -0.92px;">OUTPUT</div>
<div class="t" style="left: 575px; top: 728px; font-size: 14px; color: rgb(231, 231, 231); letter-spacing: -1.208px;">DEBUG CONSOLE</div>
<div class="t" style="left: 712px; top: 728px; font-size: 14px; color: rgb(157, 157, 157); letter-spacing: -1.114px;">TERMINAL</div>
<div class="t" style="left: 805.2px; top: 728px; font-size: 14px; color: rgb(157, 157, 157); letter-spacing: -1.9px;">PORTS</div>
<div class="t" style="left: 875.2px; top: 728px; font-size: 14px; color: rgb(157, 157, 157); letter-spacing: -1.2px;">ESP-IDF</div>
<div class="a" style="left:572px;top:747px;width:113px;height:2px;background:#e7e7e7"></div>
<div class="a" style="left:961px;top:720px;width:250px;height:30px;background:#3c3c3c;border-radius:3px"></div>
<div class="t" style="left: 970px; top: 728px; font-size: 15.5px; color: rgb(166, 166, 166); letter-spacing: -0.4px;">Filter (e.g. text, !exclude, \esca...</div>
<svg style="left:1219px;top:725px" width="20" height="20" viewBox="0 0 20 20"><circle cx="8.5" cy="8.5" r="6.5" stroke="#c5c5c5" stroke-width="1.6" fill="none"></circle><path d="M13 13l5.5 5.5" stroke="#c5c5c5" stroke-width="1.7"></path></svg>
<svg style="left:1252px;top:725px" width="20" height="20" viewBox="0 0 20 20"><path d="M1 2l5 5M6 2L1 7" stroke="#c5c5c5" stroke-width="1.3"></path><path d="M8 6.5h11M8 10.5h11M4 14.5h15M4 18h15" stroke="#c5c5c5" stroke-width="1.4"></path></svg>
<div class="a" style="left:1286px;top:725px;width:1.5px;height:20px;background:#8a8a8a"></div>
<svg style="left:1302px;top:726px" width="18" height="18" viewBox="0 0 18 18"><path d="M1 6V1h5M12 1h5v5M17 12v5h-5M6 17H1v-5" stroke="#c5c5c5" stroke-width="1.6" fill="none"></path></svg>
<svg style="left:1336px;top:728px" width="14" height="14" viewBox="0 0 14 14"><path d="M1 1l12 12M13 1L1 13" stroke="#c5c5c5" stroke-width="1.5"></path></svg>
<div class="t mono" style="left:408px;top:765px;font-size:16px;color:#4da3ff">[Remote target exited]</div>
<div class="t mono" style="left:408px;top:790px;font-size:16px;color:#4da3ff">[New Thread 1070175204]</div>
<div class="t mono" style="left:408px;top:815px;font-size:16px;color:#4da3ff">[New Thread 1070173316]</div>
<div class="t mono" style="left:408px;top:840px;font-size:16px;color:#4da3ff">[New Thread 1070166948]</div>
<div class="t mono" style="left:408px;top:865px;font-size:16px;color:#4da3ff">[New Thread 1070165316]</div>
<div class="t mono" style="left:408px;top:890px;font-size:16px;color:#4da3ff">[Switching to Thread 1070171428]</div>
<div class="t mono" style="left:408px;top:940px;font-size:16px;color:#4da3ff">Thread 2 "main" hit Temporary breakpoint 1, app_main () at C:/Users/admini/debug-example/main/main.</div>
<div class="t mono" style="left:408px;top:964px;font-size:16px;color:#4da3ff">c:14</div>
<div class="t mono" style="left:408px;top:988px;font-size:16px;color:#4da3ff">14      {</div>
<div class="t mono" style="left:408px;top:1013px;font-size:16px;color:#4da3ff">Note: automatically using hardware breakpoints for read-only addresses.</div>
<div class="a" style="left:371px;top:1031px;width:998px;height:1px;background:#414141"></div>
<div class="a" style="left:371px;top:756px;width:998px;height:6px;background:linear-gradient(#111 0%,rgba(17,17,17,0.6) 35%,rgba(30,30,30,0) 100%)"></div>
<svg style="left:384px;top:1035px" width="16" height="18" viewBox="0 0 16 18"><path d="M4 2.5l7 6.5-7 6.5" stroke="#c5c5c5" stroke-width="1.6" fill="none"/></svg>
<!-- STATUS BAR -->
<div class="a" style="left:0;top:1056px;width:1376px;height:32px;background:#cc6633"></div>
<svg style="left:0px;top:1050px" width="40" height="30" viewBox="0 1050 40 30"><path d="M18.4 1067.2l5.4 5.2-5.4 5.2M31.1 1062.2l-6.1 5.2 6.1 5.2" stroke="#ffffff" stroke-width="1.5" fill="none"></path></svg>
<svg style="left:55px;top:1060px" width="20" height="18" viewBox="0 0 20 18"><path d="M2 5V3.5a2 2 0 0 1 2-2h3.5l2 2H14a2 2 0 0 1 2 2V13a2 2 0 0 1-2 2H4a2 2 0 0 1-2-2z M2 6.5h14" stroke="#ffffff" stroke-width="1.4" fill="none"></path><path d="M18 8v6.5a2.5 2.5 0 0 1-2.5 2.5H5" stroke="#ffffff" stroke-width="1.4" fill="none"></path></svg>
<svg style="left:95px;top:1061px" width="20" height="17" viewBox="0 0 20 17"><path d="M2 1.5l4 3.5h8l4-3.5v9.5c0 3-3 5.5-8 5.5s-8-2.5-8-5.5z" fill="#ffffff"></path><ellipse cx="10" cy="11" rx="6.5" ry="3.2" fill="#cc6633"></ellipse><circle cx="7.3" cy="11" r="1.3" fill="#ffffff"></circle><circle cx="12.7" cy="11" r="1.3" fill="#ffffff"></circle></svg>
<div class="t" style="left: 118.3px; top: 1061px; font-size: 15.5px; color: rgb(255, 255, 255); letter-spacing: -1px;">ESP-IDF v5.5.0</div>
<svg style="left:232px;top:1060px" width="20" height="19" viewBox="0 0 20 19"><path d="M10 1.5l2.5 5.5 6 .6-4.5 4 1.3 5.9L10 14.5l-5.3 3 1.3-5.9-4.5-4 6-.6z" stroke="#ffffff" stroke-width="1.5" fill="none" stroke-linejoin="round"></path></svg>
<div class="t" style="left: 257px; top: 1061px; font-size: 15.5px; color: rgb(255, 255, 255); letter-spacing: -1.933px;">UART</div>
<svg style="left:314px;top:1059px" width="14" height="20" viewBox="0 0 14 20"><path d="M4 1v4.5M10 1v4.5M2 5.5h10v4a5 5 0 0 1-10 0z M7 14.5V19" stroke="#ffffff" stroke-width="1.5" fill="none"></path></svg>
<div class="t" style="left: 337px; top: 1061px; font-size: 15.5px; color: rgb(255, 255, 255); letter-spacing: -0.8px;">COM3</div>
<svg style="left:398px;top:1060px" width="20" height="19" viewBox="0 0 20 19"><rect x="4" y="3.5" width="12" height="12" rx="2" stroke="#ffffff" stroke-width="1.5" fill="none"></rect><circle cx="10" cy="9.5" r="2.6" stroke="#ffffff" stroke-width="1.5" fill="none"></circle><path d="M7 0.5v3M10 0.5v3M13 0.5v3M7 15.5v3M10 15.5v3M13 15.5v3M1 6.5h3M1 9.5h3M1 12.5h3M16 6.5h3M16 9.5h3M16 12.5h3" stroke="#ffffff" stroke-width="1.2"></path></svg>
<div class="t" style="left: 422.7px; top: 1061px; font-size: 15.5px; color: rgb(255, 255, 255); letter-spacing: -0.7px;">esp32s3</div>
<svg style="left:497.3px;top:1061.4px" width="18" height="18" viewBox="0 0 16 16"><path d="M5.81 3.51 L6.43 1.18 L9.57 1.18 L10.19 3.51 L10.80 3.85 L13.12 3.23 L14.69 5.95 L12.99 7.65 L12.99 8.35 L14.69 10.05 L13.12 12.77 L10.80 12.15 L10.19 12.49 L9.57 14.82 L6.43 14.82 L5.81 12.49 L5.20 12.15 L2.88 12.77 L1.31 10.05 L3.01 8.35 L3.01 7.65 L1.31 5.95 L2.88 3.23 L5.20 3.85Z" fill="none" stroke="#ffffff" stroke-width="1.25" stroke-linejoin="round"></path><circle cx="8" cy="8" r="2" fill="none" stroke="#ffffff" stroke-width="1.25"></circle></svg>
<svg style="left:537px;top:1060px" width="18" height="19" viewBox="0 0 18 19"><path d="M1 3.5h16M6.5 3.5V1.5h5v2M3 3.5l1.2 13.5a1.5 1.5 0 0 0 1.5 1.3h6.6a1.5 1.5 0 0 0 1.5-1.3L15 3.5M7 7v8M11 7v8" stroke="#ffffff" stroke-width="1.4" fill="none"></path></svg>
<svg style="left:577px;top:1060px" width="19" height="19" viewBox="0 0 19 19"><path d="M2 17l8-8a4.5 4.5 0 0 0 5.5-6l-2.5 2.5-2-2 2.5-2.5a4.5 4.5 0 0 0-6 5.5l-8 8a1.4 1.4 0 0 0 2.5 2.5z" stroke="#ffffff" stroke-width="1.4" fill="none" stroke-linejoin="round"></path></svg>
<svg style="left:617px;top:1059px" width="17" height="20" viewBox="0 0 17 20"><path d="M10 1L3 11h5l-2 8 8-11H9l2-7z" stroke="#ffffff" stroke-width="1.4" fill="none" stroke-linejoin="round"></path></svg>
<svg style="left:656px;top:1060px" width="20" height="19" viewBox="0 0 20 19"><rect x="1" y="1.5" width="18" height="12" rx="1.5" stroke="#ffffff" stroke-width="1.5" fill="none"></rect><path d="M10 13.5v4M5.5 17.5h9" stroke="#ffffff" stroke-width="1.5"></path></svg>
<svg style="left:696px;top:1059px" width="22" height="21" viewBox="0 0 26 24"><path d="M8 11V3l13 8-7 4.3" stroke="#ffffff" stroke-width="1.8" fill="none" stroke-linejoin="round"></path><path d="M4.5 16.5a3.5 4 0 0 1 7 0v2a3.5 4 0 0 1-7 0z M6 14a2 2 0 0 1 4 0" stroke="#ffffff" stroke-width="1.6" fill="#cc6633"></path><path d="M2 14.5l2.5 1.5M14 14.5l-2.5 1.5M1.5 18h3M14.5 18h-3M2 22l2.5-1.5M14 22l-2.5-1.5" stroke="#ffffff" stroke-width="1.5"></path></svg>
<svg style="left:739px;top:1059px" width="15" height="20" viewBox="0 0 15 20"><path d="M7 1.5c0 3.5-5.5 6-5.5 11a6 6 0 0 0 12 0c0-2.5-1.5-4.5-3-5.5.3 2-.5 3.5-1.5 4C9.5 7.5 8.5 4 7 1.5z" stroke="#ffffff" stroke-width="1.4" fill="none" stroke-linejoin="round"></path></svg>
<svg style="left:777px;top:1060px" width="20" height="19" viewBox="0 0 20 19"><rect x="1" y="1" width="18" height="17" rx="2" stroke="#ffffff" stroke-width="1.5" fill="none"></rect><path d="M4.5 5.5l3.5 3.5-3.5 3.5M9.5 13.5h6" stroke="#ffffff" stroke-width="1.5" fill="none"></path></svg>
<svg style="left:817px;top:1061px" width="17" height="17" viewBox="0 0 17 17"><rect x="1" y="1" width="15" height="15" rx="2" stroke="#ffffff" stroke-width="1.4" fill="none"></rect><path d="M4 8.5h8M9 5.5l3 3-3 3" stroke="#ffffff" stroke-width="1.4" fill="none"></path></svg>
<svg style="left:856px;top:1060px" width="20" height="20" viewBox="0 0 20 20"><circle cx="10" cy="10" r="8.5" stroke="#ffffff" stroke-width="1.5" fill="none"></circle><path d="M6.5 6.5l7 7M13.5 6.5l-7 7" stroke="#ffffff" stroke-width="1.5"></path></svg>
<div class="t" style="left: 880.9px; top: 1061px; font-size: 15.5px; color: rgb(255, 255, 255); letter-spacing: 0px;">0</div>
<svg style="left:893px;top:1060px" width="20" height="19" viewBox="0 0 20 19"><path d="M10 1.5L1 17.5h18z" stroke="#ffffff" stroke-width="1.5" fill="none" stroke-linejoin="round"></path><path d="M10 7v5.5" stroke="#ffffff" stroke-width="1.6"></path><circle cx="10" cy="14.8" r="1" fill="#ffffff"></circle></svg>
<div class="t" style="left: 917px; top: 1061px; font-size: 15.5px; color: rgb(255, 255, 255); letter-spacing: 0px;">0</div>
<svg style="left:943px;top:1059px" width="23" height="21" viewBox="0 0 26 24"><path d="M8 11V3l13 8-7 4.3" stroke="#ffffff" stroke-width="1.8" fill="none" stroke-linejoin="round"></path><path d="M4.5 16.5a3.5 4 0 0 1 7 0v2a3.5 4 0 0 1-7 0z M6 14a2 2 0 0 1 4 0" stroke="#ffffff" stroke-width="1.6" fill="#cc6633"></path><path d="M2 14.5l2.5 1.5M14 14.5l-2.5 1.5M1.5 18h3M14.5 18h-3M2 22l2.5-1.5M14 22l-2.5-1.5" stroke="#ffffff" stroke-width="1.5"></path></svg>
<div class="t" style="left: 969px; top: 1061px; font-size: 15.5px; color: rgb(255, 255, 255); letter-spacing: -0.463px;">Eclipse CDT GDB Adapter (debug-example)</div>
<svg style="left:1273.5px;top:1061px" width="18.6" height="18.6" viewBox="0 0 16 16"><path d="M5.81 3.51 L6.43 1.18 L9.57 1.18 L10.19 3.51 L10.80 3.85 L13.12 3.23 L14.69 5.95 L12.99 7.65 L12.99 8.35 L14.69 10.05 L13.12 12.77 L10.80 12.15 L10.19 12.49 L9.57 14.82 L6.43 14.82 L5.81 12.49 L5.20 12.15 L2.88 12.77 L1.31 10.05 L3.01 8.35 L3.01 7.65 L1.31 5.95 L2.88 3.23 L5.20 3.85Z" fill="none" stroke="#ffffff" stroke-width="1.25" stroke-linejoin="round"></path><circle cx="8" cy="8" r="2" fill="none" stroke="#ffffff" stroke-width="1.25"></circle></svg>
<div class="t" style="left: 1296.3px; top: 1061px; font-size: 15.5px; color: rgb(255, 255, 255); letter-spacing: -0.05px;">Build</div>
<svg style="left:1350px;top:1060px" width="20" height="19" viewBox="0 0 20 19"><path d="M5 9a5 5.5 0 0 1 10 0v3.5a5 5.5 0 0 1-10 0z M6.5 6a3.5 3.5 0 0 1 7 0" stroke="#ffffff" stroke-width="1.4" fill="none"></path><path d="M1 4.5l4 3M19 4.5l-4 3M0.5 11h4.5M19.5 11H15M1 17.5l4-3M19 17.5l-4-3" stroke="#ffffff" stroke-width="1.4"></path></svg>
</div>
</div>
<div id="frame"></div>
<div class="a" style="left:15px;top:0;width:1341px;height:2px;background:#fff"></div>

</body></html>
